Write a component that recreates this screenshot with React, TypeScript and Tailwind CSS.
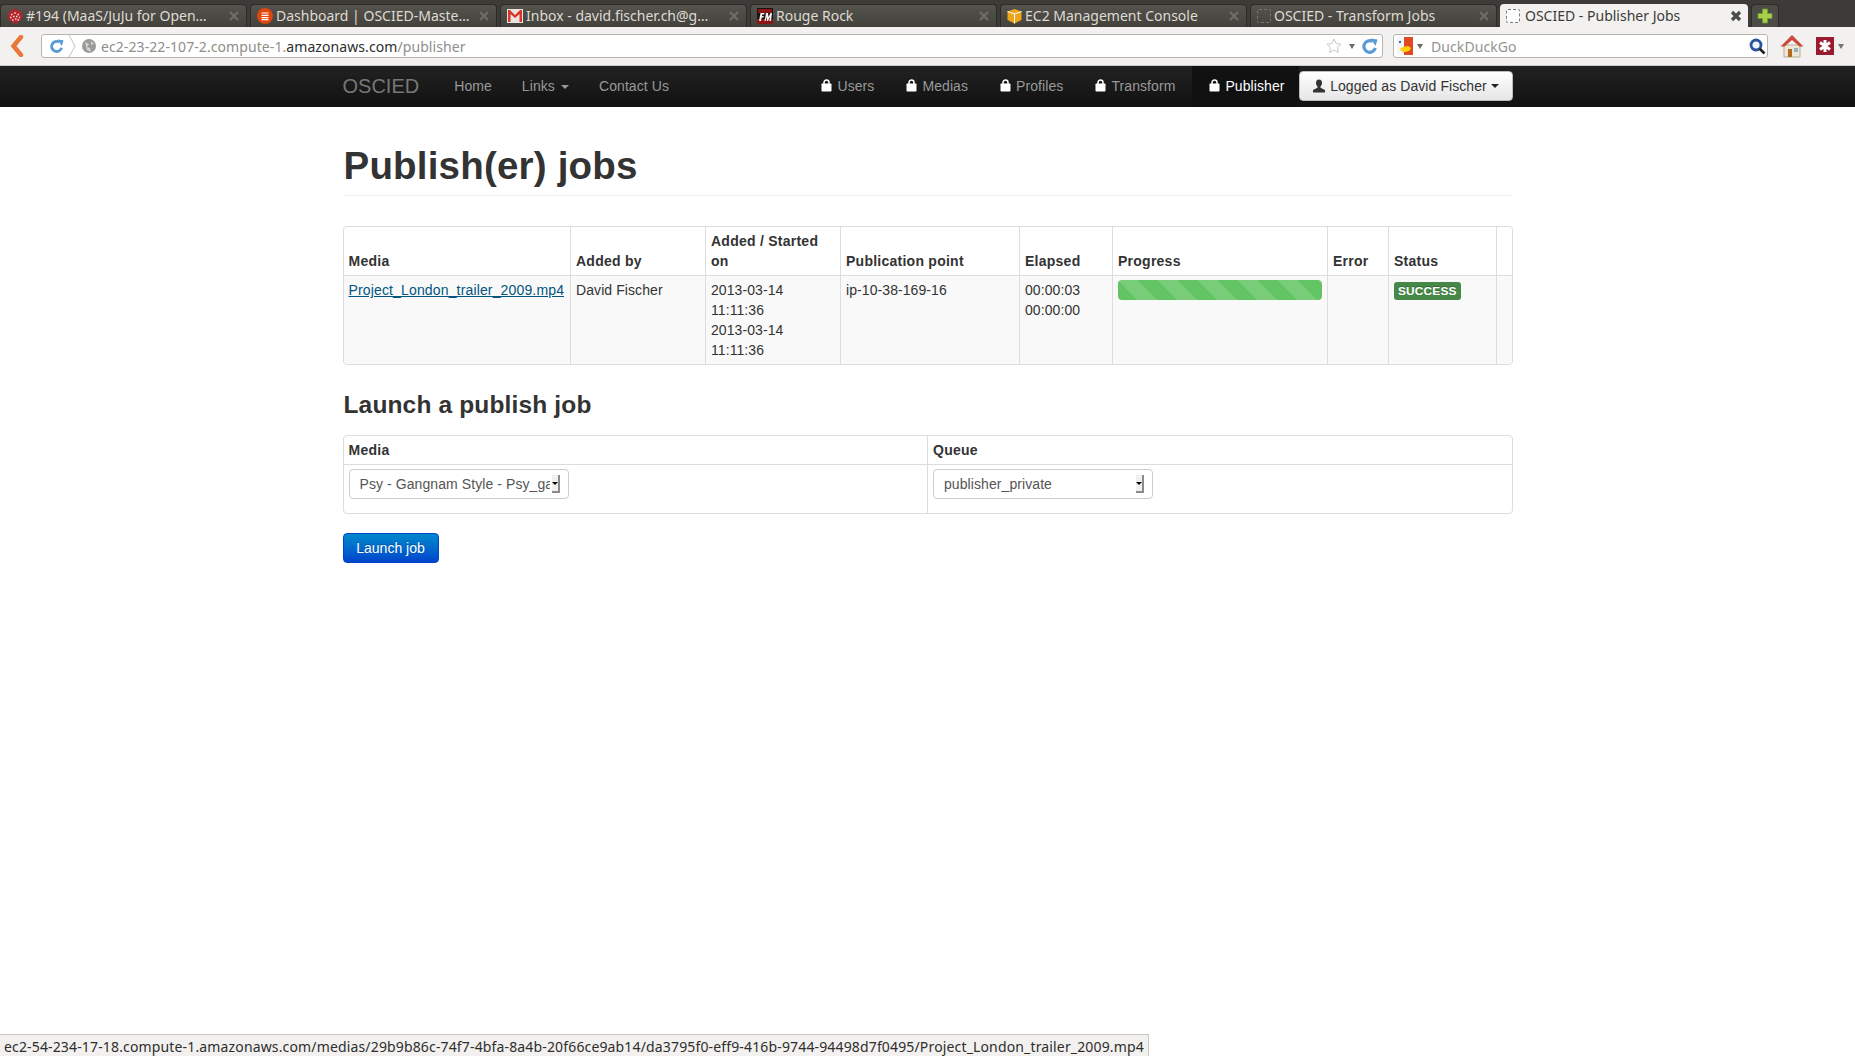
import React from "react";

const Lock = () => (
  <svg width="11" height="13" viewBox="0 0 11 13" className="shrink-0">
    <path d="M3 6V3.500a2.500 2.500 0 0 1 5 0V6" fill="none" stroke="#fff" strokeWidth="1.500" />
    <rect x="0.500" y="4.500" width="10" height="8" rx=".8" fill="#fff" />
  </svg>
);

const Close = ({ active }: { active?: boolean }) => (
  <svg width="12" height="12" viewBox="0 0 12 12" className="shrink-0">
    <path d="M2 2l8 8M10 2l-8 8" stroke={active ? "#4a4a48" : "#6e6c67"} strokeWidth={active ? 3.200 : 2.200} />
  </svg>
);

const TabIcon = ({ kind }: { kind: string }) => {
  if (kind === "trac")
    return (
      <svg width="16" height="16" viewBox="0 0 16 16" className="shrink-0">
        <path d="M8 0l1.500 2.500L12 1l.5 3 3-.5-1 3L16 9l-2 1.500.5 2.500-3-.2L10 16l-2-1.500L6 16l-1.500-3.200-3 .2.5-2.500L0 9l1.500-1.500-1-3 3 .5L4 1l2.500 1.500z" fill="#b3262c" />
        <path d="M4 6.500h1.500M7.200 5h1.500M10.500 6.500H12M3 9.500h1.500M6 8.500h1.500M9 8.500h1.500M12 9.500h1M5 12h1.500M8 11h1.500M10.500 12H12" stroke="#f6dcd6" strokeWidth="1.300" />
      </svg>
    );
  if (kind === "ubuntu")
    return (
      <svg width="16" height="16" viewBox="0 0 16 16" className="shrink-0">
        <circle cx="8" cy="8" r="8" fill="#e0470f" />
        <path d="M4.500 5h7M4.500 7.300h7M4.500 9.600h7M4.500 11.600h7" stroke="#fff" strokeWidth="1.200" />
      </svg>
    );
  if (kind === "gmail")
    return (
      <svg width="16" height="14" viewBox="0 0 16 14" className="shrink-0">
        <rect x="0" y="0" width="16" height="14" fill="#e8e4e0" />
        <path d="M1 13V1h2l5 5 5-5h2v12h-2.500V5L8 9 3.500 5v8z" fill="#d9342a" />
      </svg>
    );
  if (kind === "fm")
    return (
      <svg width="16" height="16" viewBox="0 0 16 16" className="shrink-0">
        <rect width="16" height="16" fill="#1b1214" />
        <rect x="1" y="1" width="14" height="4" fill="#8c1518" />
        <rect x="0" y="11" width="16" height="5" fill="#8c1518" />
        <path d="M2 13l1.500-8h4l-.3 1.600H5.200l-.2 1.400h1.800L6.500 9.500H4.700L4 13zM7.500 13l1.500-8h2l.5 4 2-4H15l-1 8h-1.700l.6-4.500L11 13h-1l-.6-4.500L8.800 13z" fill="#f4f0ee" />
      </svg>
    );
  if (kind === "box")
    return (
      <svg width="15" height="16" viewBox="0 0 15 16" className="shrink-0">
        <path d="M7.500 1L14.500 3.500V12L7.500 15.500L.5 12V3.500z" fill="#eda61a" />
        <path d="M.5 3.500L7.500 6L14.500 3.500M7.500 6V15.500" fill="none" stroke="#fff" strokeWidth="1" />
      </svg>
    );
  return <div className={`h-[14px] w-[14px] shrink-0 rounded-[2px] border border-dashed ${kind === "blank-active" ? "border-[#77756f] bg-white" : "border-[#77756f]"}`} />;
};

const tabs = [
  { icon: "trac", label: "#194 (MaaS/JuJu for Open…" },
  { icon: "ubuntu", label: "Dashboard | OSCIED-Maste…" },
  { icon: "gmail", label: "Inbox - david.fischer.ch@g…" },
  { icon: "fm", label: "Rouge Rock" },
  { icon: "box", label: "EC2 Management Console" },
  { icon: "blank", label: "OSCIED - Transform Jobs" },
];

const Reload = ({ size = 16 }: { size?: number }) => (
  <svg width={size} height={size} viewBox="0 0 16 16" className="shrink-0">
    <path d="M13.300 10A5.800 5.800 0 1 1 10.500 3.400" fill="none" stroke="#5b9bd5" strokeWidth="3.200" />
    <path d="M8.500 .5L15.500 1.500 13.500 8z" fill="#5b9bd5" />
  </svg>
);

const th = "border-l border-[#dddddd] first:border-l-0 px-[5px] py-1 align-bottom text-left font-bold tracking-[0.25px]";
const td = "border-l border-t border-[#dddddd] first:border-l-0 px-[5px] py-1 align-top font-normal tracking-[0.08px]";

const NavLink = ({ children, className = "" }: { children: React.ReactNode; className?: string }) => (
  <a className={`flex h-[41px] items-center pb-[2px] tracking-[0.08px] ${className || "px-[15px] text-[#999999]"}`}>{children}</a>
);

const right = [
  { label: "Users", cls: "pl-[17px] pr-[15px] text-[#999999]" },
  { label: "Medias", cls: "pl-[17px] pr-[15px] text-[#999999]" },
  { label: "Profiles", cls: "pl-[17px] pr-[15px] text-[#999999]" },
  { label: "Transform", cls: "pl-[17px] pr-[17px] text-[#999999]" },
];

export default function App() {
  return (
    <div className="flex h-[1056px] flex-col overflow-hidden bg-white font-['Liberation_Sans',Arial,sans-serif] text-[14px] leading-[20px] text-[#333333]">
      {/* tab strip */}
      <div className="flex h-[27px] items-end gap-[3px] bg-[#3c3b37] font-['Noto_Sans',sans-serif] text-[14px] leading-[20px]">
        {tabs.map((t) => (
          <div
            key={t.label}
            className="flex h-[23px] w-[247px] items-center gap-[2px] rounded-t-[4px] border border-b-0 border-[#2c2b28] bg-gradient-to-b from-[#55534e] to-[#42413c] pl-[6px] pr-[6px] text-[#dfdbd2]"
          >
            <TabIcon kind={t.icon} />
            <span className="flex-1 truncate whitespace-nowrap pl-px">{t.label}</span>
            <Close />
          </div>
        ))}
        <div className="flex h-[23px] w-[248px] items-center gap-[5px] rounded-t-[4px] bg-[#f2f1f0] pl-[6px] pr-[6px] text-[#3c3b37]">
          <TabIcon kind="blank-active" />
          <span className="flex-1 truncate whitespace-nowrap">OSCIED - Publisher Jobs</span>
          <Close active />
        </div>
        <div className="flex h-[23px] w-[28px] items-center justify-center rounded-t-[4px] border border-b-0 border-[#2c2b28] bg-[#4d4b46]">
          <svg width="16" height="16" viewBox="0 0 16 16">
            <path d="M5.500 1h5v4.500H15v5h-4.500V15h-5v-4.500H1v-5h4.500z" fill="#a6d04a" stroke="#6f9a2a" strokeWidth=".8" />
          </svg>
        </div>
      </div>

      {/* toolbar */}
      <div className="flex h-[39px] items-center border-b border-[#cfcdc8] bg-[#f2f1f0] font-['Noto_Sans',sans-serif] text-[14px]">
        <svg width="14" height="22" viewBox="0 0 14 22" className="ml-[10px] shrink-0">
          <path d="M11 2L3.500 11 11 20" fill="none" stroke="#e8783a" strokeWidth="4.500" strokeLinecap="round" />
        </svg>
        <div className="ml-[17px] flex h-[24px] w-[1342px] items-center rounded-[3px] border border-[#b8b5ae] bg-white">
          <span className="ml-[8px]"><Reload size={14} /></span>
          <svg width="8" height="22" viewBox="0 0 8 22" className="ml-[4px] shrink-0">
            <path d="M1 0l6 11-6 11" fill="none" stroke="#c5c3bd" />
          </svg>
          <svg width="14" height="14" viewBox="0 0 14 14" className="ml-[6px] shrink-0">
            <circle cx="7" cy="7" r="7" fill="#9a9a98" />
            <path d="M3 3l4 2-2 3 3 1 1 4-4-2zM9 2l3 3-3 1z" fill="#d4d4d2" />
          </svg>
          <span className="ml-[5px] flex-1 whitespace-nowrap pt-px tracking-[0.08px] text-[#8f8e89]">
            ec2-23-22-107-2.compute-1.<span className="text-[#2e2e2c]">amazonaws.com</span>/publisher
          </span>
          <svg width="16" height="16" viewBox="0 0 16 16" className="shrink-0">
            <path d="M8 1l2.100 4.600 5 .6-3.700 3.400 1 5L8 12l-4.400 2.600 1-5L.9 6.200l5-.6z" fill="#fff" stroke="#c9c8c4" />
          </svg>
          <div className="ml-[7px] h-0 w-0 border-x-[3.500px] border-t-[5px] border-x-transparent border-t-[#6d6c68]" />
          <span className="ml-[7px] mr-[4px]"><Reload size={16} /></span>
        </div>
        <div className="ml-[10px] flex h-[24px] w-[375px] items-center rounded-[3px] border border-[#b8b5ae] bg-white">
          <svg width="16" height="18" viewBox="0 0 16 18" className="ml-[3px] shrink-0">
            <rect x="4" y="0" width="12" height="18" fill="#e04a22" />
            <rect x="0" y="0" width="7" height="18" fill="#f4f6fa" />
            <circle cx="3" cy="5" r="1.200" fill="#3a6fb0" />
            <path d="M3 12c2-3 6-2 8-3l3 2c-1 3-4 4-7 4-2 0-3-1-4-3z" fill="#fdd20a" />
          </svg>
          <div className="ml-[4px] h-0 w-0 border-x-[3.500px] border-t-[5px] border-x-transparent border-t-[#6d6c68]" />
          <span className="ml-[8px] flex-1 pt-px tracking-[0.08px] text-[#95938e]">DuckDuckGo</span>
          <svg width="17" height="17" viewBox="0 0 17 17" className="mr-[1px] shrink-0">
            <circle cx="7" cy="7" r="5" fill="#eef4fb" stroke="#2b54a0" strokeWidth="2.800" />
            <path d="M10.500 10.500L15.500 15.500" stroke="#222" strokeWidth="2.600" />
          </svg>
        </div>
        <svg width="24" height="24" viewBox="0 0 24 24" className="ml-[12px] shrink-0">
          <path d="M4 11h16v12H4z" fill="#eee6d6" stroke="#b8ad98" />
          <path d="M12 1L0.500 12.500h4L12 6l7.500 6.500h4z" fill="#c8483c" />
          <rect x="8" y="15" width="4" height="8" fill="#b46a1c" />
          <rect x="14" y="14" width="4" height="4" fill="#8fb4c8" />
        </svg>
        <svg width="18" height="18" viewBox="0 0 18 18" className="ml-[12px] shrink-0">
          <rect width="18" height="18" fill="#9a1b2f" />
          <path d="M9 3v12M4 5.500l10 7M14 5.500l-10 7" stroke="#fff" strokeWidth="3" />
        </svg>
        <div className="ml-[4px] h-0 w-0 border-x-[3.500px] border-t-[5px] border-x-transparent border-t-[#77756f]" />
      </div>

      {/* navbar */}
      <nav className="h-[41px] bg-gradient-to-b from-[#222222] to-[#111111]">
        <div className="mx-auto flex w-[1170px] items-center">
          <a className="mb-[2px] mr-[20px] text-[20px] font-extralight leading-[20px] text-[#777777]">OSCIED</a>
          <NavLink>Home</NavLink>
          <NavLink>
            Links
            <span className="ml-[6px] mt-[2px] h-0 w-0 border-x-4 border-t-4 border-x-transparent border-t-[#999999]" />
          </NavLink>
          <NavLink>Contact Us</NavLink>
          <div className="ml-auto flex items-center">
            {right.map((r) => (
              <NavLink key={r.label} className={r.cls}>
                <span className="mr-[5px]"><Lock /></span>
                {r.label}
              </NavLink>
            ))}
            <NavLink className="bg-[#111111] pl-[17px] pr-[14px] text-white">
              <span className="mr-[5px]"><Lock /></span>
              Publisher
            </NavLink>
            <button className="mb-[2px] flex h-[30px] w-[214px] items-center justify-center rounded-[4px] border border-[#bbbbbb] bg-gradient-to-b from-white to-[#e6e6e6] text-[14px] tracking-[0.08px] text-[#333333]">
              <svg width="14" height="14" viewBox="0 0 14 14" className="mr-[4px] shrink-0">
                <path d="M7 0.500c2 0 3 1.500 3 3.500 0 1.500-.6 2.700-1.500 3.500v1.300L13 11v2.500H1V11l4.500-2.200V7.500C4.600 6.700 4 5.500 4 4c0-2 1-3.500 3-3.500z" fill="#333" />
              </svg>
              Logged as David Fischer
              <span className="ml-[4px] mt-[1px] h-0 w-0 border-x-4 border-t-4 border-x-transparent border-t-[#222222]" />
            </button>
          </div>
        </div>
      </nav>

      {/* content */}
      <main className="mx-auto flex w-[1170px] flex-1 flex-col">
        <div className="mt-[39px] border-b border-[#eeeeee] pb-[9px]">
          <h1 className="pl-px text-[38.500px] font-bold leading-[40px] tracking-[0.2px]">Publish(er) jobs</h1>
        </div>

        <div className="mt-[30px] overflow-hidden rounded-[4px] border border-[#dddddd]">
          <table className="w-full table-fixed border-collapse">
            <colgroup>
              <col className="w-[227px]" />
              <col className="w-[135px]" />
              <col className="w-[135px]" />
              <col className="w-[179px]" />
              <col className="w-[93px]" />
              <col className="w-[215px]" />
              <col className="w-[61px]" />
              <col className="w-[108px]" />
              <col />
            </colgroup>
            <thead>
              <tr>
                <th className={th}>Media</th>
                <th className={th}>Added by</th>
                <th className={th}>Added / Started on</th>
                <th className={th}>Publication point</th>
                <th className={th}>Elapsed</th>
                <th className={th}>Progress</th>
                <th className={th}>Error</th>
                <th className={th}>Status</th>
                <th className={th}></th>
              </tr>
            </thead>
            <tbody className="bg-[#f9f9f9]">
              <tr>
                <td className={td}>
                  <a className="whitespace-nowrap tracking-[0.15px] text-[#005580] underline">Project_London_trailer_2009.mp4</a>
                </td>
                <td className={td}>David Fischer</td>
                <td className={td}>
                  2013-03-14
                  <br />
                  11:11:36
                  <br />
                  2013-03-14
                  <br />
                  11:11:36
                </td>
                <td className={td}>ip-10-38-169-16</td>
                <td className={td}>
                  00:00:03
                  <br />
                  00:00:00
                </td>
                <td className={td}>
                  <div className="h-[20px] rounded-[4px] bg-[#62c462] bg-[linear-gradient(45deg,rgba(255,255,255,0.15)_25%,transparent_25%,transparent_50%,rgba(255,255,255,0.15)_50%,rgba(255,255,255,0.15)_75%,transparent_75%,transparent)] bg-[length:40px_40px]" />
                </td>
                <td className={td}></td>
                <td className={td}>
                  <span className="inline-block rounded-[3px] bg-[#468847] px-[4px] py-[2px] align-baseline text-[11.844px] font-bold leading-[14px] tracking-[0.2px] text-white [text-shadow:0_-1px_0_rgba(0,0,0,0.25)]">
                    SUCCESS
                  </span>
                </td>
                <td className={td}></td>
              </tr>
            </tbody>
          </table>
        </div>

        <h3 className="mt-[20px] pl-px text-[24.500px] font-bold leading-[40px] tracking-[0.15px]">Launch a publish job</h3>

        <div className="mt-[10px] overflow-hidden rounded-[4px] border border-[#dddddd]">
          <table className="w-full table-fixed border-collapse">
            <thead>
              <tr>
                <th className={th}>Media</th>
                <th className={th}>Queue</th>
              </tr>
            </thead>
            <tbody>
              <tr>
                <td className={td}>
                  <Select value="Psy - Gangnam Style - Psy_gangnam_style.mp4" />
                </td>
                <td className={td}>
                  <Select value="publisher_private" />
                </td>
              </tr>
            </tbody>
          </table>
        </div>

        <button className="mt-[19px] h-[30px] w-[96px] rounded-[4px] border border-[#0044cc] bg-gradient-to-b from-[#0088cc] to-[#0044cc] text-[14px] text-white [text-shadow:0_-1px_0_rgba(0,0,0,0.25)]">
          Launch job
        </button>
      </main>

      {/* status bar */}
      <div className="fixed bottom-0 left-0 h-[22px] w-[1149px] overflow-hidden whitespace-nowrap border-r border-t border-[#c9c7c2] bg-[#f2f1f0] pl-[4px] font-['Noto_Sans',sans-serif] text-[14px] leading-[23px] tracking-[0.15px] text-[#2e2e2c]">
        ec2-54-234-17-18.compute-1.amazonaws.com/medias/29b9b86c-74f7-4bfa-8a4b-20f66ce9ab14/da3795f0-eff9-416b-9744-94498d7f0495/Project_London_trailer_2009.mp4
      </div>
    </div>
  );
}

function Select({ value }: { value: string }) {
  return (
    <div className="relative mb-[10px] h-[30px] w-[220px] overflow-hidden rounded-[4px] border border-[#cccccc] bg-white">
      <select className="h-full w-full appearance-none bg-transparent pl-[10px] pr-[18px] text-[14px] tracking-[0.08px] text-[#555555] outline-none">
        <option>{value}</option>
      </select>
      <div className="pointer-events-none absolute right-[8px] top-[5px] flex h-[18px] w-[8px] items-start justify-center border-b-2 border-r-2 border-[#8a8a8a] bg-[#efefef] pt-[7px]">
        <span className="h-0 w-0 border-x-[3px] border-t-[3px] border-x-transparent border-t-black" />
      </div>
    </div>
  );
}
